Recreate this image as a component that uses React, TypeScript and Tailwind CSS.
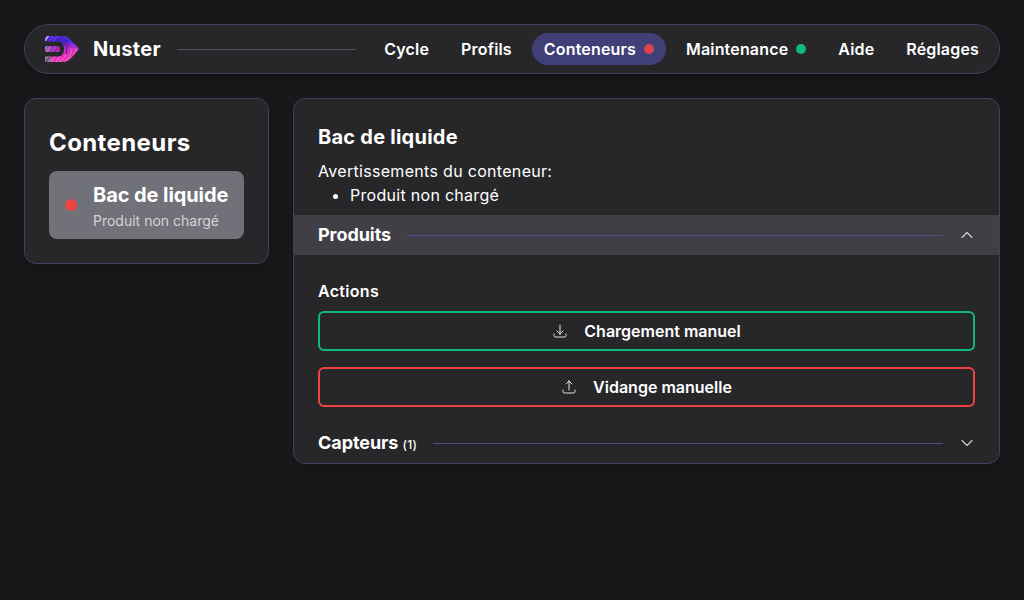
import type { ReactNode } from "react";
import {
  HiOutlineArrowDownTray,
  HiOutlineArrowUpTray,
  HiOutlineChevronDown,
  HiOutlineChevronUp,
} from "react-icons/hi2";

function Logo() {
  return (
    <svg viewBox="0 0 36 28" className="h-7 w-9 shrink-0">
      <defs>
        <linearGradient id="body" x1="0.4" y1="0" x2="0.6" y2="1">
          <stop offset="0" stopColor="#4f2bd8" />
          <stop offset="0.25" stopColor="#3a22c8" />
          <stop offset="0.42" stopColor="#8a2bd0" />
          <stop offset="0.6" stopColor="#d42fc0" />
          <stop offset="0.8" stopColor="#f02fb4" />
          <stop offset="1" stopColor="#d040c0" />
        </linearGradient>
        <linearGradient id="bar" x1="0" y1="0" x2="1" y2="0">
          <stop offset="0" stopColor="#b995cc" />
          <stop offset="0.5" stopColor="#b13cc8" />
          <stop offset="1" stopColor="#b82ab8" />
        </linearGradient>
        <clipPath id="shape">
          <path d="M2 1H18C22 1 24 2 26.500 4.500L34 12.500Q35.200 14 34 15.500L26.500 23.500C24 26 22 27 18 27H2Q1 27 1 26V22.500Q1 21.500 2 21.500H14.500C18 21.500 20 18 20 14S18 6.500 14.500 6.500H2Q1 6.500 1 5.500V2Q1 1 2 1Z" />
          <rect x="1" y="11.200" width="14.500" height="5.600" rx="1.500" />
        </clipPath>
      </defs>
      <g clipPath="url(#shape)">
        <rect width="36" height="28" fill="url(#body)" />
        <rect y="10.500" width="16" height="7" fill="url(#bar)" />
        <rect y="21" width="7" height="7" fill="#8c7898" />
        <g fill="none" strokeWidth="0.7">
          <path d="M0 7L5 0" stroke="#d9a4ee" strokeWidth="1.500" />
          <path d="M4 8L10 0M8 8L14 0" stroke="#9c50ec" />
          <path d="M0 18L5 10M5 18L10 10M10 18L15 10" stroke="#48286a" />
          <path d="M1 28L7 20" stroke="#554860" strokeWidth="1.200" />
          <path d="M6 28L12 20M11 28L17 20" stroke="#ef9be0" />
          <path d="M20 1L34 14" stroke="#7a48f4" />
          <path d="M14 27Q22 24 24 13M18 28Q27 24 28 13M22 27Q31 21 32 13" stroke="#ff78d0" />
          <path d="M21 8Q24.500 12 22 19" stroke="#6a1c88" strokeWidth="1.400" />
        </g>
      </g>
    </svg>
  );
}

function NavItem({ label, dot, active }: { label: string; dot?: string; active?: boolean }) {
  return (
    <a
      className={`flex h-8 items-center gap-2 rounded-full px-3 text-base font-semibold tracking-[0.17px] ${
        active ? "bg-[#413f78]" : ""
      }`}
    >
      {label}
      {dot && <span className={`size-2.5 rounded-full ${dot}`} />}
    </a>
  );
}

function SectionHeader({
  title,
  count,
  open,
}: {
  title: string;
  count?: number;
  open?: boolean;
}) {
  const Chevron = open ? HiOutlineChevronUp : HiOutlineChevronDown;
  return (
    <div className={`flex h-10 items-center px-6 ${open ? "bg-[#3f3f45]" : ""}`}>
      <h3 className="text-lg font-bold tracking-[-0.06px]">
        {title}
        {count !== undefined && (
          <span className="ml-1 text-xs font-medium tracking-[0.3px]">({count})</span>
        )}
      </h3>
      <div className="mx-4 h-px grow bg-[#5253a0]/80" />
      <Chevron className="size-4 text-zinc-300" strokeWidth={1.7} />
    </div>
  );
}

function ActionButton({ color, icon, label }: { color: string; icon: ReactNode; label: string }) {
  return (
    <button
      className={`flex h-10 w-full items-center justify-center gap-4 rounded-md border-2 font-semibold ${color}`}
    >
      {icon}
      {label}
    </button>
  );
}

export default function App() {
  return (
    <div className="flex min-h-screen flex-col gap-6 bg-[#18181a] p-6 font-['Inter',sans-serif] text-white">
      <nav className="flex h-[50px] items-center rounded-full border border-[#413f62] bg-[#27272a] pr-2 pl-[19px] shadow-lg">
        <Logo />
        <span className="ml-[13px] text-xl font-bold tracking-[0.3px]">Nuster</span>
        <div className="mx-4 h-px grow bg-zinc-600" />
        <div className="flex gap-2">
          <NavItem label="Cycle" />
          <NavItem label="Profils" />
          <NavItem label="Conteneurs" dot="bg-[#dc444b]" active />
          <NavItem label="Maintenance" dot="bg-[#10b981]" />
          <NavItem label="Aide" />
          <NavItem label="Réglages" />
        </div>
      </nav>

      <div className="flex items-start gap-6">
        <aside className="h-[166px] w-[245px] shrink-0 rounded-xl border border-[#413f62] bg-[#27272a] p-6 shadow-lg">
          <h1 className="mt-1 mb-3 text-2xl font-bold tracking-[0.4px]">Conteneurs</h1>
          <div className="flex h-[68px] items-center gap-4 rounded-lg bg-[#71717a] px-4">
            <span className="size-3 shrink-0 rounded-full bg-[#ef4444]" />
            <div className="whitespace-nowrap">
              <h2 className="pt-0.5 pb-0.5 text-xl font-bold tracking-[-0.08px]">Bac de liquide</h2>
              <p className="text-sm text-zinc-300">Produit non chargé</p>
            </div>
          </div>
        </aside>

        <main className="h-[366px] grow rounded-xl border border-[#413f62] bg-[#27272a] shadow-lg">
          <div className="h-[116px] px-6 pt-6">
            <h2 className="mb-2 text-xl font-bold tracking-[0.24px]">Bac de liquide</h2>
            <p className="tracking-[0.31px]">Avertissements du conteneur:</p>
            <ul className="list-disc pl-8 tracking-[0.29px]">
              <li>Produit non chargé</li>
            </ul>
          </div>
          <SectionHeader title="Produits" open />
          <div className="flex h-[168px] flex-col px-6 pt-6">
            <h4 className="mb-2 font-semibold tracking-[0.3px]">Actions</h4>
            <div className="flex flex-col gap-4">
              <ActionButton
                color="border-[#10b981]"
                icon={<HiOutlineArrowDownTray className="size-4 text-zinc-200" />}
                label="Chargement manuel"
              />
              <ActionButton
                color="border-[#ef4444]"
                icon={<HiOutlineArrowUpTray className="size-4 text-zinc-200" />}
                label="Vidange manuelle"
              />
            </div>
          </div>
          <SectionHeader title="Capteurs" count={1} />
        </main>
      </div>
    </div>
  );
}
